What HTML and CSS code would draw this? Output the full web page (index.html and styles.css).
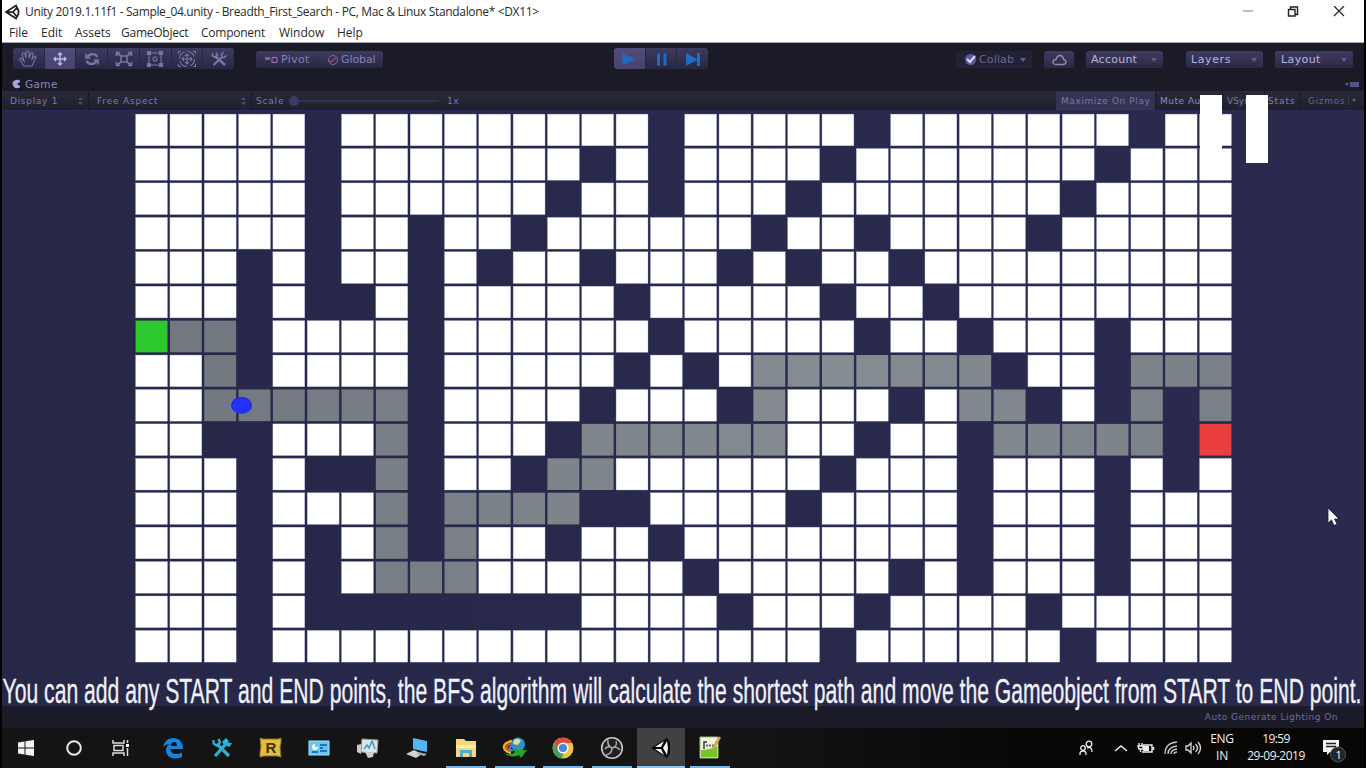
FILE: index.html
```html
<!DOCTYPE html>
<html lang="en">
<head>
<meta charset="utf-8">
<title>Unity - Breadth_First_Search</title>
<link rel="stylesheet" href="styles.css">
</head>
<body>
<div class="screen">
  <header class="window-head">
    <div class="titlebar">
      <svg class="unity-logo" width="15" height="16" viewBox="0 0 30 32"><path d="M2 16 22 3 27 13 27 20 22 29Z M5 16H16L25 6M16 16 25 27" fill="none" stroke="#222" stroke-width="3.5"/></svg>
      <span class="title">Unity 2019.1.11f1 - Sample_04.unity - Breadth_First_Search - PC, Mac &amp; Linux Standalone* &lt;DX11&gt;</span>
      <div class="controls">
        <svg width="10" height="12" viewBox="0 0 10 12"><path d="M0 5h10" stroke="#bbb" stroke-width="2"/></svg>
        <svg width="12" height="12" viewBox="0 0 12 12"><path d="M1.500 3.500h6.500v6.500H1.500zM3.500 3V1H10.500v7.500H8.500" fill="none" stroke="#222" stroke-width="1.400"/></svg>
        <svg width="12" height="12" viewBox="0 0 12 12"><path d="M1 0l10 10M11 0L1 10" stroke="#222" stroke-width="1.200"/></svg>
      </div>
    </div>
    <nav class="menu"><span class="m1">File</span><span class="m2">Edit</span><span class="m3">Assets</span><span class="m4">GameObject</span><span class="m5">Component</span><span class="m6">Window</span><span>Help</span></nav>
  </header>

  <div class="toolbar">
    <div class="group tools">
      <b><svg width="20" height="18" viewBox="0 0 20 18"><path d="M6 16 2 10Q1 8 3 8L6 11 4 4Q5 2 7 4L8 8 8 2Q10 0 11 2V8L13 3Q15 2 15 4L14 9 17 6Q19 7 17 9L14 16Z"/></svg></b>
      <b class="on"><svg width="20" height="18" viewBox="0 0 20 18"><path class="bright" d="M10 3v12M4 9h12M8 5l2-2 2 2M8 13l2 2 2-2M6 7 4 9l2 2M14 7l2 2-2 2"/></svg></b>
      <b><svg width="20" height="18" viewBox="0 0 20 18"><path class="thick" d="M15.500 7Q13 3 8 4.500L5 7M4.500 11Q7 15 12 13.500L15 11"/><path class="mid" d="M4 3.500V8h4.500M16 14.500V10h-4.500"/></svg></b>
      <b><svg width="20" height="18" viewBox="0 0 20 18"><path class="mid" d="M7 6h6v6H7zM3 3l4 3M17 3l-4 3M3 15l4-3M17 15l-4-3M2.500 6V2.500H6M17.500 6V2.500H14M2.500 12v3.500H6M17.500 12v3.500H14"/></svg></b>
      <b><svg width="20" height="18" viewBox="0 0 20 18"><path d="M4 3h12v12H4z"/><circle cx="10" cy="9" r="2"/><path class="dots" d="M2 1h4v4H2zM14 1h4v4h-4zM2 13h4v4H2zM14 13h4v4h-4z"/></svg></b>
      <b><svg width="20" height="18" viewBox="0 0 20 18"><circle cx="10" cy="9" r="7.500" stroke-dasharray="9 2.800"/><path d="M10 4v10M5 9h10M8 6l2-2 2 2M8 12l2 2 2-2M7 7 5 9l2 2M13 7l2 2-2 2M1.500 4V1.500H4M18.500 4V1.500H16M1.500 14v2.500H4M18.500 14v2.500H16"/></svg></b>
      <b><svg width="20" height="18" viewBox="0 0 20 18"><path class="thick" d="M6 6l10 9M4.500 15 13 7"/><path class="mid" d="M3.500 3v3l3 1.500L8.500 5 7 2.500M12 5l2.500-3M14.500 8l3-2.500M12 5l2.500 3"/></svg></b>
    </div>
    <div class="group pivot">
      <svg width="13" height="8" viewBox="0 0 13 8"><path d="M0 1h5v3H0z" fill="#a2587a"/><path d="M7 1.500h5v5H7z" fill="#5b2448" stroke="#8484b5"/></svg><span class="t-pivot">Pivot</span>
      <svg width="12" height="12" viewBox="0 0 12 12"><circle cx="6" cy="6" r="4.500" fill="#37304f" stroke="#7474a5"/><path d="M1 7q3 2 5-1l4-3" fill="none" stroke="#a04860" stroke-width="1.500"/></svg><span class="t-global">Global</span>
    </div>
    <div class="group play">
      <b class="on"><svg width="20" height="18" viewBox="0 0 20 18"><path class="blue" d="M3.500 3.500 16 9.500 3.500 15z"/></svg></b>
      <b><svg width="20" height="18" viewBox="0 0 20 18"><path class="blue" d="M6 3.500h3v12H6zM12.500 3.500h3v12h-3z"/></svg></b>
      <b><svg width="20" height="18" viewBox="0 0 20 18"><path class="blue" d="M3 3l11 6V3h3v13h-3v-6L3 16z"/></svg></b>
    </div>
    <div class="btn collab"><svg width="13" height="13" viewBox="0 0 13 13"><circle cx="6.500" cy="6.500" r="5.500" fill="#5f5b9b"/><path d="M3 6l3 3 5-6" fill="none" stroke="#dcd8ff" stroke-width="2"/></svg><span class="t-collab">Collab</span><i class="caret"></i></div>
    <div class="btn cloud"><svg width="15" height="12" viewBox="0 0 15 12"><path d="M4 10.500Q1 10.500 1 8t3-2.500Q5 1.500 8 1.500t3.500 4Q14 6 14 8t-2.500 2.500Z" fill="none" stroke="#8d89b5" stroke-width="1.300"/></svg></div>
    <div class="btn account"><span class="t-account">Account</span><i class="caret"></i></div>
    <div class="btn layers"><span class="t-layers">Layers</span><i class="caret"></i></div>
    <div class="btn layout"><span class="t-layout">Layout</span><i class="caret"></i></div>
  </div>

  <div class="tab"><svg width="9" height="10" viewBox="0 0 9 10"><path d="M8 1.500Q5 0 2.500 1.500T0.500 5 2.500 8.500 8 8.500V7L5 5l3-2z" fill="#a9a5d8"/></svg><span class="t-game">Game</span><i class="caret"></i><i class="lines"></i></div>

  <div class="options">
    <div class="cell display"><span class="t-display">Display 1</span><svg class="updown" width="5" height="8" viewBox="0 0 5 8"><path d="M2.500 0 5 3H0zM2.500 8 5 5H0z"/></svg></div>
    <div class="cell aspect"><span class="t-free">Free Aspect</span><svg class="updown" width="5" height="8" viewBox="0 0 5 8"><path d="M2.500 0 5 3H0zM2.500 8 5 5H0z"/></svg></div>
    <div class="cell scale"><span class="t-scale">Scale</span><div class="slider"><i></i></div><span class="t-one">1x</span></div>
    <div class="toggle max"><span class="t-max">Maximize On Play</span></div>
    <div class="toggle mute"><span class="t-mute">Mute Audio</span></div>
    <div class="toggle vsync"><span class="t-vsync">VSync</span></div>
    <div class="toggle stats"><span class="t-stats">Stats</span></div>
    <div class="toggle gizmos"><span class="t-giz">Gizmos</span><i class="bar"></i><i class="caret"></i></div>
  </div>

  <main class="game">
    <svg id="maze" width="1098" height="550"></svg>
    <div class="ball"></div>
    <svg class="caption" width="1362" height="46"><text x="0.500" y="32" textLength="1359" lengthAdjust="spacingAndGlyphs">You can add any START and END points, the BFS algorithm will calculate the shortest path and move the Gameobject from START to END point.</text></svg>
  </main>
  <div class="status"><span class="t-auto">Auto Generate Lighting On</span></div>

  <footer class="taskbar">
    <div class="task start"><svg width="18" height="18" viewBox="0 0 18 18"><path d="M1 3.500 7.500 2.500V8.500H1zM8.500 2.300 17 1V8.500H8.500zM1 9.500H7.500V15.500L1 14.500zM8.500 9.500H17V17L8.500 15.700z" fill="#f4f4f4"/></svg></div>
    <div class="task cortana"><svg width="18" height="18" viewBox="0 0 18 18"><circle cx="9" cy="9" r="6.800" fill="none" stroke="#e8e8e8" stroke-width="2"/></svg></div>
    <div class="task view"><svg width="18" height="18" viewBox="0 0 18 18"><path d="M1 1v3h11V1M2 6.500h9v5H2zM1 17v-3h11v3M15.500 1v3M15.500 9v8" fill="none" stroke="#ddd" stroke-width="1.500"/><path d="M14 5h3v3h-3z" fill="#fff"/></svg></div>
    <div class="task"><svg width="22" height="22" viewBox="0 0 22 22"><path d="M1 10Q3 1 12 1q9 1 9 11H8q1 5 6 5 3 0 6-1.500V20q-4 1.500-8 1.500Q4 20 4 13q0-4 4-6-4 0-7 3zM8.500 9H15q0-4-3-4-3 .5-3.500 4z" fill="#1683dd"/></svg></div>
    <div class="task"><svg width="22" height="22" viewBox="0 0 22 22"><path d="M6 7 18 19M4 19 14 8" stroke="#28b5d5" stroke-width="3.200"/><path d="M2.500 3v3.500l3 2 3.500-3L7.500 2" fill="none" stroke="#28b5d5" stroke-width="2.300"/><path d="M11 5l4-4 2 2 1 3 3 0-2.500 4L13 8z" fill="#28b5d5"/></svg></div>
    <div class="task"><svg width="23" height="21" viewBox="0 0 23 21"><path d="M1 1 4 2H19L22 1V6L21 10 22 20 18 19H5L1 20V15L2 10Z" fill="#e5bd3c" stroke="#8a6d22"/><text x="6.500" y="16" class="rtext">R</text></svg></div>
    <div class="task"><svg width="22" height="18" viewBox="0 0 22 18"><rect x="1" y="2" width="20" height="14" fill="#69c5f4" stroke="#a6e0fa"/><path d="M7 5a3 3 0 1 0 3 3H7z" fill="#fff"/><path d="M12 6h7M12 9h3M4 13h6M12 12h7" stroke="#157abc" stroke-width="2"/></svg></div>
    <div class="task"><svg width="24" height="22" viewBox="0 0 24 22"><path d="M6 2 22 3 21 16 5 15z" fill="#dbe5ea" stroke="#999"/><path d="M8 12l3-4 2 3 3-7 3 8" fill="none" stroke="#419bc4" stroke-width="1.500"/><path d="M1 8 5 7v10l-4-2zM9 15h9l-1 5-5 1z" fill="#c8cccd"/></svg></div>
    <div class="task"><svg width="24" height="22" viewBox="0 0 24 22"><path d="M8 1 22 4V15L8 12z" fill="#52b5f4"/><path d="M1 17 9 13 17 17 11 21z" fill="#cdd4d7"/><path d="M13 15 22 17l-3 2-7-2z" fill="#9caeb9"/></svg></div>
    <div class="task open"><svg width="22" height="20" viewBox="0 0 22 20"><path d="M1 1h8l2 2h10v16H1z" fill="#f5d67b"/><path d="M1 7h20v3H1z" fill="#fff0ad"/><path d="M5 12h12v7h-3v-4H8v4H5z" fill="#48add9"/></svg></div>
    <div class="task open"><svg width="25" height="22" viewBox="0 0 25 22"><circle cx="16" cy="7.500" r="7" fill="#358dc4"/><path d="M12 3q4-3 7 1l-3 4-5-1z" fill="#d9dd9a"/><path d="M10 4Q2 6 2 10t7 6" fill="none" stroke="#e6b52c" stroke-width="2.500"/><path d="M10 6.500Q4.500 8 4.500 11l5 3.500" fill="none" stroke="#df4e28" stroke-width="2"/><path d="M10 9Q7 10 8 12l3 2" fill="none" stroke="#388edc" stroke-width="2"/><path d="M2 16q7 3 11-1l-2-2 14 0-6 8-2-3Q9 22 2 16" fill="#22a526"/></svg></div>
    <div class="task open"><svg width="22" height="22" viewBox="0 0 22 22"><circle cx="11" cy="11" r="10.500" fill="#e9c53e"/><path d="M2 6A10.500 10.500 0 0 1 20.200 6H11L7 14z" fill="#dc4a3a"/><path d="M2 6 7 14h5l-2 7.500A10.500 10.500 0 0 1 2 6" fill="#3da257"/><circle cx="11" cy="11" r="4.800" fill="#4b86dc" stroke="#fff" stroke-width="1.500"/></svg></div>
    <div class="task open"><svg width="24" height="24" viewBox="0 0 24 24"><circle cx="12" cy="12" r="10.300" fill="#202023" stroke="#c8c8c8" stroke-width="1.600"/><path d="M8 4q-1 6 4 8 5-2 8 2M12 12q0 6-6 7M12 12Q8 9 5 13M12 12q6-2 4-7" fill="none" stroke="#aaa" stroke-width="1.500"/></svg></div>
    <div class="task open active"><svg width="22" height="22" viewBox="0 0 22 22"><path d="M1 11 17 1 20 6V16L17 21z" fill="#080808"/><path d="M5 10 14 4 11 10zM5 12h6l3 6zM13 11 17 4 18 11 17 18z" fill="#f3f3f3"/></svg></div>
    <div class="task open"><svg width="24" height="24" viewBox="0 0 24 24"><path d="M2 1h18v21H2z" fill="#f0f5df" stroke="#9ab571"/><path d="M3 14q8 0 16-4v11H3z" fill="#74c72b"/><path d="M9 6H6v7M9 8.500v2M12 8.500v2M15 8.500v2" fill="none" stroke="#333" stroke-width="1.500"/><path d="M22 1 14 14" stroke="#d6a348" stroke-width="2.500"/></svg></div>
    <div class="tray">
      <svg class="people" width="16" height="17" viewBox="0 0 16 17"><g fill="none" stroke="#eee" stroke-width="1.300"><circle cx="5" cy="8" r="2.300"/><path d="M2 15q-.5-4 3-4t3 4"/><circle cx="11" cy="4" r="2.800"/><path d="M9 8q5-2 5 4"/></g></svg>
      <svg class="chev" width="14" height="9" viewBox="0 0 14 9"><path d="M1 7l6-5 6 5" fill="none" stroke="#eee" stroke-width="1.500"/></svg>
      <svg class="batt" width="18" height="12" viewBox="0 0 18 12"><path d="M6 3h9v7H5M16.500 5v3M2 1v3M5 1v3M1 4h5v3H2zM3.500 7v3" fill="none" stroke="#eee" stroke-width="1.400"/><path d="M6 4h6v5H6z" fill="#eee"/></svg>
      <svg class="wifi" width="14" height="14" viewBox="0 0 14 14"><path d="M1 13Q1 2 13 1M4 13q0-7 9-8M7 13q0-4 6-5M10 13q0-2 3-2" fill="none" stroke="#ccc" stroke-width="1.300"/></svg>
      <svg class="vol" width="17" height="14" viewBox="0 0 17 14"><path d="M1 5h2l3-3v10L3 9H1zM8 5q2 2 0 4M10.500 3q4 4 0 8M13 1q5 6 0 12" fill="none" stroke="#ddd" stroke-width="1.300"/></svg>
      <div class="lang"><span>ENG</span><span>IN</span></div>
      <div class="clock"><span class="time">19:59</span><span class="date">29-09-2019</span></div>
      <div class="note"><svg width="26" height="25" viewBox="0 0 26 25"><path d="M1 1h16v12H8l-3 3v-3H1z" fill="#f3f3f3"/><path d="M4 4.500h10M4 7.500h10" stroke="#222" stroke-width="1.300"/><circle cx="16" cy="15.500" r="7.500" fill="#252525" stroke="#555"/><text x="13.500" y="20" class="ntext">1</text></svg></div>
    </div>
  </footer>

  <div class="pause"><i></i><i></i></div>
  <svg class="cursor" width="13" height="20" viewBox="0 0 13 20"><path d="M1 1V16L4.500 13 7 18.500 10 17 7.500 12H12z" fill="#fff" stroke="#1b1c34" stroke-width=".8"/></svg>
</div>
<script src="maze.js"></script>
</body>
</html>
```
FILE: styles.css
```css
* { box-sizing: border-box; }
body { margin: 0; background: #000; font-family: "Open Sans", "Noto Sans", sans-serif; }
.screen { position: relative; width: 1366px; height: 768px; padding: 0 2px; display: flex; flex-direction: column; }
svg { display: block; flex: none; }
span { white-space: nowrap; }

.window-head { height: 43px; background: #fff; color: #2a2a2a; border-bottom: 1px solid #a7a7b0; }
.titlebar { display: flex; align-items: center; height: 23px; padding-left: 3px; }
.title { margin-left: 5px; font-size: 12px; letter-spacing: -0.34px; }
.controls { margin-left: auto; display: flex; gap: 34px; padding-right: 19px; height: 20px; align-items: center; }
.menu { display: flex; height: 20px; line-height: 20px; font-size: 12px; padding-left: 7px; }
.m1 { width: 32px; } .m2 { width: 34px; } .m3 { width: 46px; } .m4 { width: 80px; } .m5 { width: 78px; } .m6 { width: 58px; }
.m4, .m5 { letter-spacing: -.25px; }

.toolbar { height: 34px; background: #1b1b28; display: flex; align-items: flex-start; padding: 5px 0 0 11px; color: #8480b3; font: 11px "DejaVu Sans", sans-serif; }
.group { display: flex; border-radius: 3px; overflow: hidden; background: linear-gradient(#3e3b61, #282742); }
.group b { flex: 1; display: flex; align-items: center; justify-content: center; border-right: 1px solid #2a283f; }
.group b:last-child { border: 0; }
.group b.on { background: linear-gradient(#504c7a, #49446e); }
.tools { width: 221px; height: 21px; }
.tools svg { fill: none; stroke: #7874a6; stroke-width: 1.1; }
.tools .bright { stroke: #bebbe8; stroke-width: 1.4; }
.tools .mid { stroke-width: 1.6; }
.tools .thick { stroke-width: 2.4; }
.tools .dots { fill: #7874a6; stroke: none; }
.pivot { width: 127px; height: 17px; margin: 3px 0 0 22px; padding-left: 9px; align-items: center; }
.t-pivot { width: 46px; margin-left: 3px; letter-spacing: .35px; }
.pivot .t-global { margin-left: 2px; letter-spacing: -.1px; }
.play { width: 94px; height: 21px; margin-left: 231px; }
.blue { fill: #1d6cc0; }
.btn { display: flex; align-items: center; height: 17px; margin-top: 3px; border-radius: 3px; background: linear-gradient(#3f3b62, #2b2946); color: #b9b5dc; padding-left: 5px; }
.caret { margin-left: auto; margin-right: 6px; border: 3px solid transparent; border-top: 4px solid #625e8a; border-bottom: 0; }
.collab { width: 76px; margin-left: 248px; background: #222135; color: #6b678f; padding-left: 8px; }
.t-collab { margin-left: 2px; letter-spacing: .15px; }
.cloud { width: 30px; margin-left: 12px; padding-left: 8px; }
.account { width: 77px; margin-left: 12px; }
.t-account { letter-spacing: .25px; }
.layers { width: 77px; margin-left: 23px; }
.t-layers { letter-spacing: .6px; }
.layout { width: 78px; margin-left: 12px; padding-left: 6px; }
.t-layout { letter-spacing: .4px; }

.tab { height: 14px; background: #1b1b28; display: flex; align-items: center; padding-left: 10px; color: #8c88b8; font: 10.5px "DejaVu Sans", sans-serif; }
.t-game { margin-left: 4px; letter-spacing: .4px; }
.tab .caret { margin-right: 1px; border-width: 3px 2px 0; }
.lines { width: 9px; height: 5px; background: #57538a; margin-right: 5px; }
.options { height: 19px; background: linear-gradient(#2a293c, #1f1f2d); display: flex; color: #7c79aa; font: 9px "DejaVu Sans", sans-serif; }
.cell, .toggle { display: flex; align-items: center; border-right: 1px solid #1a1a27; }
.updown { margin-left: auto; margin-right: 5px; fill: #4c4972; }
.display { width: 87px; padding-left: 8px; }
.t-display { letter-spacing: .7px; }
.aspect { width: 163px; padding-left: 8px; }
.t-free { letter-spacing: .8px; }
.scale { width: 220px; padding-left: 4px; border: 0; }
.t-scale { width: 29px; letter-spacing: .8px; }
.slider { margin-left: 10px; width: 144px; height: 2px; background: #34324d; display: flex; align-items: center; }
.slider i { width: 10px; height: 10px; margin-left: -6px; border-radius: 50%; background: #3f3b60; flex: none; }
.t-one { margin-left: 8px; letter-spacing: .6px; }
.max { margin-left: 584px; width: 100px; padding-left: 5px; background: #353352; color: #7b78ab; }
.t-max { letter-spacing: .6px; }
.mute { width: 67px; padding-left: 4px; color: #8e8bb8; }
.t-mute { letter-spacing: .5px; }
.vsync { width: 42px; padding-left: 4px; }
.stats { width: 36px; padding-left: 3px; color: #8380ac; }
.t-stats { letter-spacing: .9px; }
.gizmos { flex: 1; padding-left: 7px; border: 0; color: #66638f; }
.t-giz { letter-spacing: .7px; }
.bar { width: 1px; height: 8px; background: #3c395a; margin-left: 3px; }
.gizmos .caret { margin: 0 0 0 3px; border-width: 3px 2px 0; }

.game { position: relative; height: 596px; flex: none; background: linear-gradient(90deg, #272848, #292a4e); border-top: 1px solid #2a2c58; padding: 2px 0 0 133px; }
.w { fill: #fff; stroke: #a9acd4; stroke-width: .35; }
.p { stroke: none; }
.s { fill: #2dc92f; }
.e { fill: #ea3f3f; }
.ball { position: absolute; left: 229px; top: 286px; width: 21px; height: 17px; border-radius: 50%; background: radial-gradient(ellipse at 50% 60%, #2431ff 0 55%, #1823c5 75%); }
.caption { position: absolute; left: 0; top: 560px; z-index: 2; font: 35px "Liberation Sans", Arial, sans-serif; fill: #f0f1fa; stroke: #f0f1fa; stroke-width: .3; overflow: visible; }
.status { height: 22px; background: #1c1b2a; color: #6f6ba2; font: 9px/22px "DejaVu Sans", sans-serif; text-align: right; padding-right: 26px; }
.t-auto { letter-spacing: .5px; }

.taskbar { height: 40px; background: linear-gradient(90deg, #141414 55%, #090606 75%); display: flex; }
.task { width: 48.8px; display: flex; align-items: center; justify-content: center; border-bottom: 2px solid transparent; padding-top: 1px; }
.start { width: 47.5px; }
.cortana { width: 48.5px; }
.view { width: 50.6px; padding-right: 4.6px; }
.task.open { background: linear-gradient(#77b5e4, #77b5e4) center bottom / 40px 2px no-repeat; background-origin: border-box; background-clip: border-box; }
.task.active { background: #414143; border-color: #8dc4ef; }
.rtext { font: bold 15px "Liberation Sans", sans-serif; fill: #3d3315; }
.tray { margin-left: auto; display: flex; align-items: center; color: #eee; font-size: 12px; }
.chev { margin-left: 20px; }
.batt { margin-left: 9px; }
.wifi { margin-left: 9px; }
.vol { margin-left: 7px; }
.lang { margin-left: 8px; width: 24px; }
.clock { margin-left: 12px; width: 60px; }
.lang { letter-spacing: -.3px; }
.lang, .clock { display: flex; flex-direction: column; align-items: center; line-height: 17px; height: 36px; padding-bottom: 2px; }
.time { letter-spacing: -.6px; }
.date { letter-spacing: -.5px; }
.note { margin-left: 16px; margin-right: 16px; padding-top: 7px; }
.ntext { font: 11px "Open Sans", sans-serif; fill: #fff; }

.pause { position: absolute; left: 1200px; top: 95px; display: flex; gap: 24px; z-index: 3; }
.pause i { width: 22px; height: 68px; background: #fff; }
.cursor { position: absolute; left: 1327px; top: 507px; }
```
FILE: maze.js
```js
// w = free cell, # = wall, p = path, s = start, e = end
const rows = [
  'wwwww#wwwwwwwww#wwwww#wwwwwww#ww',
  'wwwww#wwwwwww#w#wwww#wwwwwww#www',
  'wwwww#wwwwww#ww#www#wwwwwww#wwww',
  'wwwww#ww#ww#wwwwww#ww#wwww#wwwww',
  'www#w#ww#w#ww#www#w#ww#wwwwwwwww',
  'www#w##w#wwwww#wwwww#ww#wwwwwwww',
  'spp#wwww#wwwwww#wwwww#ww#www#www',
  'wwp#wwww#wwwww#w#wppppppp#ww#ppp',
  'wwpppppp#wwww#www#pwww#wpp#w#p#p',
  'ww##wwwp#www#ppppppww#ww#ppppp#e',
  'www#w##p#ww#ppwwwwww#www#www#w#w',
  'www#wwwp#pppp##wwww#wwww#www#www',
  'www#w#wp#pww#ww#wwwwwwww#www#www',
  'www#w#wpppwwwwww#wwwww#w#www#www',
  'www#w########wwww#www#wwww#wwwww',
  'www#wwwwwwwwwwwwwwww#wwwwww#wwww'
];
const PITCH_X = 34.32, PITCH_Y = 34.42;
const maze = document.getElementById('maze');
rows.forEach((row, y) => {
  [...row].forEach((c, x) => {
    if (c === '#') return;
    const cell = document.createElementNS('http://www.w3.org/2000/svg', 'rect');
    cell.setAttribute('class', c);
    cell.setAttribute('x', (0.6 + x * PITCH_X).toFixed(2));
    cell.setAttribute('y', (1.1 + y * PITCH_Y).toFixed(2));
    cell.setAttribute('width', 31.9);
    cell.setAttribute('height', 31.7);
    if (c === 'p') {
      const k = Math.max(0, 1 - Math.abs(x - 20) / 20);
      cell.setAttribute('fill', `rgb(${112 + 22 * k | 0},${119 + 22 * k | 0},${127 + 19 * k | 0})`);
    }
    maze.appendChild(cell);
  });
});
```
